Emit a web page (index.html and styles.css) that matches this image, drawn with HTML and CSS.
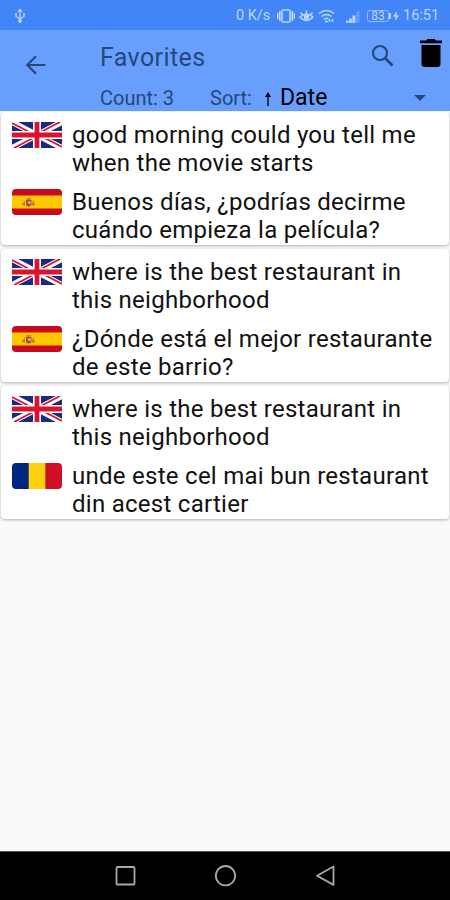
FILE: index.html
```html
<!doctype html>
<html lang="en">
<head>
    <meta charset="utf-8">
    <meta name="viewport" content="width=device-width, initial-scale=1">
    <title>Favorites</title>
    <link rel="stylesheet" href="styles.css">
</head>
<body>

<!-- Flags, reused in the cards -->
<svg class="sprite" aria-hidden="true">
    <symbol id="flag-gb" viewBox="0 0 50 26" preserveAspectRatio="none">
        <path fill="#1a2a80" d="M0 0h50v26H0z"/>
        <path stroke="#fff" stroke-width="5.6" d="M0 0l50 26M50 0L0 26"/>
        <path stroke="#d8142f" stroke-width="1.8" d="M0 1l22 11.5M50 25L28 13.5M48 0L27 11M2 26l21-11"/>
        <path stroke="#fff" stroke-width="8" d="M25 0v26M0 13h50"/>
        <path stroke="#d8142f" stroke-width="4.8" d="M25 0v26M0 13h50"/>
    </symbol>
    <symbol id="flag-es" viewBox="0 0 50 26" preserveAspectRatio="none">
        <path fill="#c90a1c" d="M0 0h50v26H0z"/>
        <path fill="#ffc800" d="M0 6.5h50v13H0z"/>
        <path fill="#c98a3c" d="M11.500 11.500H13V17h-1.500zM20.500 11.500H22V17h-1.500zM14.500 9h4.500v2h-4.500z"/>
        <path fill="#a3522c" d="M14 11h5.500v5q-2.700 3-5.500 0z"/>
        <circle cx="17.500" cy="13.500" r="1.600" fill="#d9a6a0"/>
        <path fill="#a8683c" d="M10 14.500h3v1.200h-3zM20 14.500h3v1.200h-3z"/>
    </symbol>
    <symbol id="flag-ro" viewBox="0 0 50 26" preserveAspectRatio="none">
        <path fill="#002780" d="M0 0h17v26H0z"/>
        <path fill="#fcd20f" d="M16.7 0h17v26h-17z"/>
        <path fill="#d00f26" d="M33.3 0H50v26H33.3z"/>
    </symbol>
</svg>

<div class="status-bar">
    <svg class="usb" width="12" height="16" viewBox="0 0 12 16" fill="none" stroke="currentColor" stroke-width="1.3">
        <path d="M6 2v11M2 6v2.5l4 2.5 4-2.5V6M4 4l2-2.5L8 4"/>
        <circle cx="6" cy="13" r="1.3" fill="currentColor"/>
        <path d="M1 6h2M9 6h2"/>
    </svg>
    <span class="speed">0 K/s</span>
    <svg class="vibrate" width="18" height="14" viewBox="0 0 18 14" fill="none" stroke="currentColor" stroke-width="1.6">
        <rect x="5" y="1" width="8" height="12" rx="1"/>
        <path d="M2.800 2v10M15.200 2v10M.8 4v6M17.200 4v6"/>
    </svg>
    <svg class="eye" width="15" height="14" viewBox="0 0 15 14" fill="none" stroke="currentColor" stroke-width="1.5">
        <path d="M1 8q6.500-6 13 0q-6.500 7-13 0zM7.500 4.500V1.500M3.500 5.500l-2-2M11.500 5.500l2-2"/>
        <circle cx="7.500" cy="8" r="2" fill="currentColor"/>
    </svg>
    <svg class="wifi" width="17" height="14" viewBox="0 0 17 14" fill="none" stroke="currentColor" stroke-width="1.6">
        <path d="M1 4.500q7.500-6 15 0M3.500 7.500q5-4 10 0M6 10.300q2.500-2 4.500-.3"/>
        <path d="M7 12.500h3M11.500 10v3M14.500 10v3"/>
    </svg>
    <svg class="signal" width="14" height="13" viewBox="0 0 14 13" fill="currentColor">
        <path d="M0 10.500h2.400V13H0zM3 8.500h2.800V13H3zM6.400 5.500h3V13h-3z"/>
        <path opacity=".3" d="M10 2.500L13.500 0v13H10z"/>
    </svg>
    <span class="battery">83</span>
    <svg class="bolt" width="6" height="12" viewBox="0 0 6 12" fill="currentColor">
        <path d="M3.500 1L0 6.700h2.500V11L6 5.300H3.500z"/>
    </svg>
    <span class="clock">16:51</span>
</div>

<header class="app-bar">
    <svg class="back" width="20" height="20" viewBox="0 0 20 20" fill="none" stroke="currentColor" stroke-width="2.200">
        <path d="M19.500 10H1.500M10 1.200L1.200 10l8.800 8.800"/>
    </svg>
    <div class="app-bar-content">
        <div class="title-row">
            <h1 class="title">Favorites</h1>
            <svg class="search" width="24" height="24" viewBox="0 0 24 24" fill="none" stroke="currentColor" stroke-width="2.200">
                <circle cx="9" cy="9" r="7"/>
                <path stroke-width="2.800" d="M14 14l7.500 7.500"/>
            </svg>
            <svg class="trash" width="22" height="28" viewBox="0 0 22 28" fill="#000">
                <path d="M0 1.500h6L7.500 0h7L16 1.500h6v2.700H0zM1.500 6h19v19q0 3-3 3h-13q-3 0-3-3z"/>
            </svg>
        </div>
        <div class="sort-row">
            <span class="count">Count: 3</span>
            <span class="sort-label">Sort:</span>
            <svg class="sort-arrow" width="8" height="14" viewBox="0 0 8 14" fill="none" stroke="#000" stroke-width="1.300">
                <path d="M4 14V2"/>
                <path fill="#000" stroke="none" d="M4 0l3 5H1z"/>
            </svg>
            <span class="sort-value">Date</span>
            <span class="caret"></span>
        </div>
    </div>
</header>

<main class="list">
    <article class="card">
        <div class="phrase">
            <svg class="flag flag-square"><use href="#flag-gb"/></svg>
            <p class="text">good morning could you tell me<br>when the movie starts</p>
        </div>
        <div class="phrase">
            <svg class="flag"><use href="#flag-es"/></svg>
            <p class="text" lang="es">Buenos días, ¿podrías decirme<br>cuándo empieza la película?</p>
        </div>
    </article>
    <article class="card">
        <div class="phrase">
            <svg class="flag flag-square"><use href="#flag-gb"/></svg>
            <p class="text">where is the best restaurant in<br>this neighborhood</p>
        </div>
        <div class="phrase">
            <svg class="flag"><use href="#flag-es"/></svg>
            <p class="text" lang="es">¿Dónde está el mejor restaurante<br>de este barrio?</p>
        </div>
    </article>
    <article class="card">
        <div class="phrase">
            <svg class="flag flag-square"><use href="#flag-gb"/></svg>
            <p class="text">where is the best restaurant in<br>this neighborhood</p>
        </div>
        <div class="phrase">
            <svg class="flag"><use href="#flag-ro"/></svg>
            <p class="text" lang="ro">unde este cel mai bun restaurant<br>din acest cartier</p>
        </div>
    </article>
</main>

<nav class="nav-bar">
    <svg width="22" height="22" viewBox="0 0 22 22"><rect x="2.500" y="2" width="18" height="17.500" rx="1"/></svg>
    <svg width="22" height="22" viewBox="0 0 22 22"><circle cx="11.500" cy="10.700" r="9.700"/></svg>
    <svg width="22" height="22" viewBox="0 0 22 22"><path d="M19.500 1.500v18.400L3 10.700z"/></svg>
</nav>

</body>
</html>
```
FILE: styles.css
```css
*, *::before, *::after {
    box-sizing: border-box;
}

:root {
    --status-bg: #4285f6;
    --bar-bg: #689ffe;
    --bar-color: #264879;
    --status-color: #b9d5fd;
}

body {
    display: flex;
    flex-direction: column;
    height: 900px;
    margin: 0;
    overflow: hidden;
    font-family: Roboto, "Liberation Sans", sans-serif;
    background: #fafafa;
}

svg {
    flex: none;
    display: block;
}

.sprite {
    position: absolute;
    width: 0;
    height: 0;
}

/* Status bar */
.status-bar {
    display: flex;
    align-items: center;
    flex: none;
    height: 30px;
    padding: 2px 10px 0 14px;
    font-size: 14.5px;
    line-height: 16px;
    color: var(--status-color);
    background: var(--status-bg);
}

.speed {
    width: 37px;
    margin-left: auto;
    white-space: nowrap;
}

.vibrate {
    margin-left: 4px;
}

.eye {
    margin-left: 4px;
}

.wifi {
    margin-left: 4px;
}

.signal {
    margin-left: 11px;
}

.battery {
    position: relative;
    width: 22px;
    height: 12px;
    margin-left: 7px;
    border: 1px solid #94bafb;
    border-radius: 3px;
    font-size: 12px;
    line-height: 10px;
    text-align: center;
}

.battery::after {
    content: "";
    position: absolute;
    top: 2px;
    right: -3px;
    width: 2px;
    height: 6px;
    background: currentColor;
}

.bolt {
    margin-left: 4px;
}

.clock {
    width: 37px;
    margin-left: 4px;
    white-space: nowrap;
}

/* App bar */
.app-bar {
    display: flex;
    flex: none;
    height: 81px;
    padding-left: 26px;
    color: var(--bar-color);
    background: var(--bar-bg);
}

.back {
    margin-top: 25px;
}

.app-bar-content {
    flex: 1;
    margin-left: 54px;
}

.title-row {
    display: flex;
    height: 54px;
    padding-right: 8px;
}

.title {
    margin: 13px auto 0 0;
    font-size: 25px;
    font-weight: 400;
    line-height: 30px;
    letter-spacing: .4px;
}

.search {
    margin: 14px 25px 0 0;
}

.trash {
    margin-top: 9px;
}

.sort-row {
    display: flex;
    align-items: center;
    height: 28px;
    padding-right: 24px;
    font-size: 20px;
    line-height: 24px;
}

.count {
    width: 110px;
}

.sort-label {
    width: 54px;
}

.sort-arrow {
    margin-top: 1px;
}

.sort-value {
    margin-left: 8px;
    font-size: 23px;
    color: #000;
}

.caret {
    margin-left: auto;
    border: 6px solid transparent;
    border-top-color: currentColor;
    border-bottom: 0;
}

/* Cards */
.list {
    display: flex;
    flex-direction: column;
    flex: 1;
    gap: 4px;
    padding: 1px 1px 0;
}

.card {
    display: flex;
    flex-direction: column;
    gap: 10px;
    height: 133px;
    padding: 9px 11px 0;
    border-radius: 4px;
    background: #fff;
    box-shadow: 0 1px 3px rgba(0, 0, 0, .3);
}

.phrase {
    display: flex;
    align-items: flex-start;
    gap: 10px;
}

.flag {
    width: 50px;
    height: 26px;
    margin-top: 1px;
    border-radius: 4px;
}

.flag-square {
    border-radius: 1px;
}

.text {
    margin: 0;
    font-size: 24px;
    line-height: 28.4px;
    letter-spacing: .27px;
    white-space: nowrap;
    color: #111;
}

/* System navigation */
.nav-bar {
    display: flex;
    align-items: center;
    justify-content: center;
    gap: 78px;
    flex: none;
    height: 49px;
    background: #000;
    border-top: 1px solid #555;
}

.nav-bar svg {
    fill: none;
    stroke: #a8a8a8;
    stroke-width: 1.8;
    stroke-linejoin: round;
}
```
